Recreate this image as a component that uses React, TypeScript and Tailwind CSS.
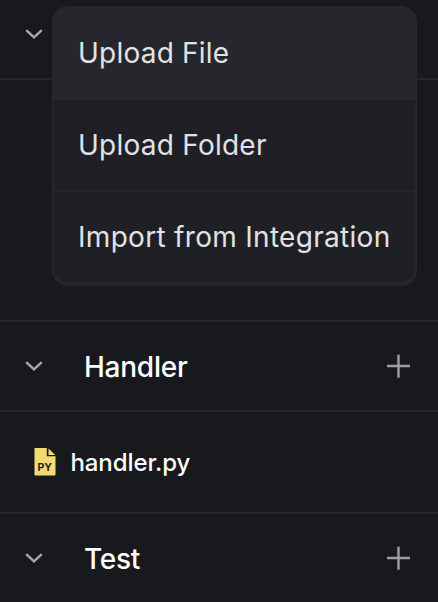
import React from "react";

function Chevron() {
  return (
    <svg className="ml-6 block h-5 w-5 shrink-0" viewBox="0 0 20 20" fill="none">
      <path d="M3 6.8 10 13.4 17 6.8" stroke="#a6a7aa" strokeWidth="2.5" strokeLinecap="round" />
    </svg>
  );
}

function Plus() {
  return (
    <svg className="mr-7 ml-auto block h-6 w-6 shrink-0" viewBox="0 0 24 24" fill="none">
      <path d="M12.5 .7V23.7M1 12H24" stroke="#9d9cab" strokeWidth="2.4" />
    </svg>
  );
}

function SectionHeader({ title, last = false }: { title: string; last?: boolean }) {
  return (
    <div className={`flex items-center ${last ? "h-[88px]" : "h-[90px] border-b-2 border-[#26272c]"}`}>
      <Chevron />
      <h2 className="ml-10 pt-0.5 text-[28px] leading-9 font-medium tracking-[-0.25px] whitespace-nowrap text-white">{title}</h2>
      <Plus />
    </div>
  );
}

function PythonFileIcon() {
  return (
    <svg className="ml-[34px] block h-7 w-[22px] shrink-0" viewBox="0 0 22 28">
      <path d="M1 0H12.8V8.2H21.5V26.5Q21.5 27.5 20.5 27.5H1.5Q.5 27.5 .5 26.5V.5Q.5 0 1 0Z" fill="#f5d973" />
      <path d="M14.5 .5 21.2 7H14.5Z" fill="#f5d973" />
      <text x="10.8" y="23" textAnchor="middle" className="font-[Inter,sans-serif] text-[10.5px] font-bold" fill="#242219">PY</text>
    </svg>
  );
}

export default function App() {
  return (
    <div className="relative h-[602px] w-[438px] overflow-hidden bg-[#18191d] font-[Inter,sans-serif]">
      <div className="flex h-20 items-start border-b-2 border-[#26272c] pt-6">
        <Chevron />
      </div>
      <div className="h-[242px] border-b-2 border-[#26272c]" />
      <SectionHeader title="Handler" />
      <div className="flex h-[102px] items-center border-b-2 border-[#26272c]">
        <PythonFileIcon />
        <span className="ml-[14.5px] pt-0.5 text-2xl font-medium tracking-[-0.1px] whitespace-nowrap text-white">handler.py</span>
      </div>
      <SectionHeader title="Test" last />

      <div className="absolute top-[6px] left-[52px] flex h-[280px] w-[365px] flex-col overflow-hidden rounded-2xl border-2 border-b-4 border-[#26272c] bg-[#1f2025] text-[28px] leading-9 tracking-[0.3px] whitespace-nowrap text-[#e1e2e6]">
        <div className="flex h-[92px] items-center bg-[#26272c] pb-0.5 pl-6 tracking-[0.22px]">Upload File</div>
        <div className="flex h-[92px] items-center border-b-2 border-[#26272c] pl-6 tracking-[0.24px]">Upload Folder</div>
        <div className="flex h-[90px] items-center pl-6">Import from Integration</div>
      </div>
    </div>
  );
}
